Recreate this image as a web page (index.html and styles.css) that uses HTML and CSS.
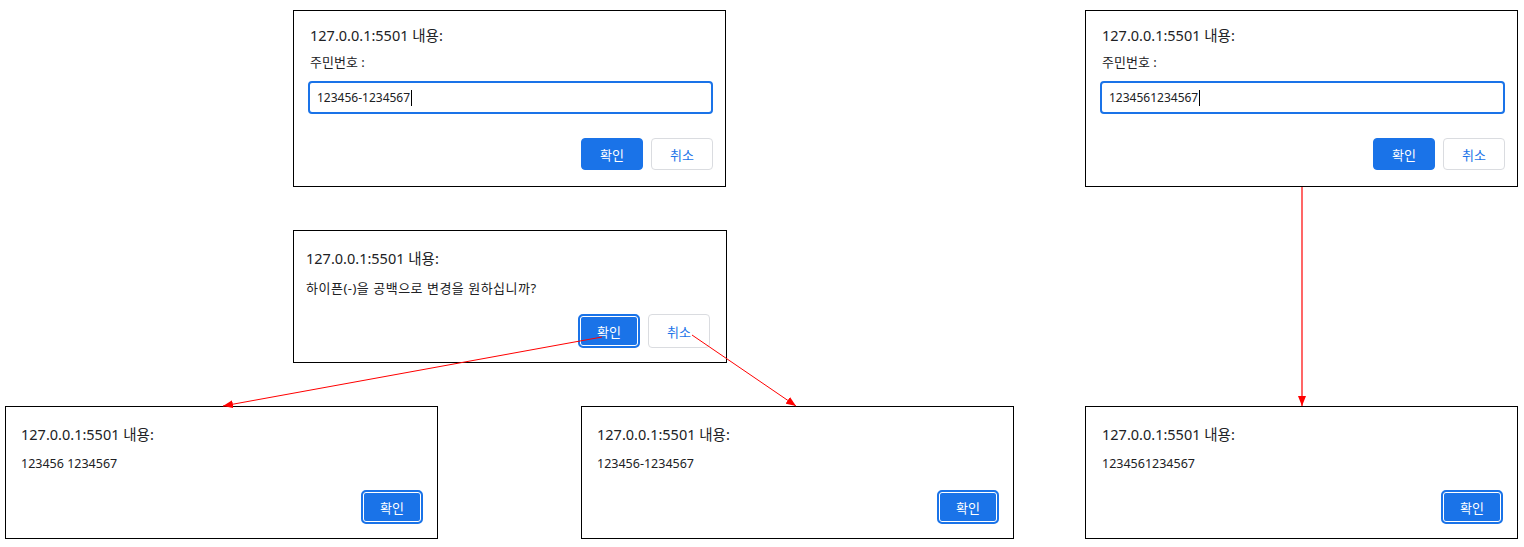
FILE: index.html
```html
<!DOCTYPE html>
<html lang="ko">
<head>
<meta charset="utf-8">
<title>prompt flow</title>
<link rel="stylesheet" href="styles.css">
</head>
<body>
<div class="canvas">
  <section class="dialog prompt d1">
    <div class="title">127.0.0.1:5501 내용:</div>
    <div class="label">주민번호 :</div>
    <div class="field"><span class="value">123456-1234567</span><span class="caret"></span></div>
    <div class="actions">
      <button class="btn primary">확인</button>
      <button class="btn secondary">취소</button>
    </div>
  </section>

  <section class="dialog alert d2">
    <div class="title">127.0.0.1:5501 내용:</div>
    <div class="message ko">하이픈(-)을 공백으로 변경을 원하십니까?</div>
    <div class="actions">
      <button class="btn primary focused">확인</button>
      <button class="btn secondary">취소</button>
    </div>
  </section>

  <section class="dialog alert d3">
    <div class="title">127.0.0.1:5501 내용:</div>
    <div class="message">123456 1234567</div>
    <div class="actions">
      <button class="btn primary focused">확인</button>
    </div>
  </section>

  <section class="dialog alert d4">
    <div class="title">127.0.0.1:5501 내용:</div>
    <div class="message">123456-1234567</div>
    <div class="actions">
      <button class="btn primary focused">확인</button>
    </div>
  </section>

  <section class="dialog prompt d5">
    <div class="title">127.0.0.1:5501 내용:</div>
    <div class="label">주민번호 :</div>
    <div class="field"><span class="value">1234561234567</span><span class="caret"></span></div>
    <div class="actions">
      <button class="btn primary">확인</button>
      <button class="btn secondary">취소</button>
    </div>
  </section>

  <section class="dialog alert d6">
    <div class="title">127.0.0.1:5501 내용:</div>
    <div class="message">1234561234567</div>
    <div class="actions">
      <button class="btn primary focused">확인</button>
    </div>
  </section>

  <svg class="arrows" width="1524" height="547" viewBox="0 0 1524 547">
    <defs>
      <marker id="head" markerWidth="10" markerHeight="8" refX="10" refY="4" orient="auto" markerUnits="userSpaceOnUse">
        <path d="M0 0 L10 4 L0 8 Z" fill="#ff0000"/>
      </marker>
    </defs>
    <line x1="602" y1="337" x2="223" y2="406" stroke="#ff0000" stroke-width="1" marker-end="url(#head)"/>
    <line x1="692" y1="335" x2="796" y2="406" stroke="#ff0000" stroke-width="1" marker-end="url(#head)"/>
    <line x1="1302" y1="187" x2="1302" y2="406" stroke="#ff0000" stroke-width="1.2" marker-end="url(#head)"/>
  </svg>
</div>
</body>
</html>
```

FILE: styles.css
```css
html, body {
  margin: 0;
  padding: 0;
  background: #ffffff;
}

.canvas {
  position: relative;
  width: 1524px;
  height: 547px;
  overflow: hidden;
  font-family: "Noto Sans", "Noto Sans CJK KR", sans-serif;
  color: #202124;
}

.dialog {
  position: absolute;
  box-sizing: border-box;
  width: 433px;
  border: 1px solid #000000;
  background: #ffffff;
  display: flex;
  flex-direction: column;
}

.prompt {
  height: 177px;
  padding: 14px 12px 16px 16px;
}

.alert {
  height: 133px;
  padding: 17px 14px 14px 15px;
}

.d1 { left: 293px; top: 10px; }
.d2 { left: 293px; top: 230px; width: 434px; padding-left: 12px; padding-right: 16px; }
.d3 { left: 5px; top: 406px; }
.d4 { left: 581px; top: 406px; }
.d5 { left: 1085px; top: 10px; }
.d6 { left: 1085px; top: 406px; padding-left: 16px; }

.title {
  font-size: 14.5px;
  line-height: 20px;
  color: #202124;
  white-space: nowrap;
}

.label {
  margin-top: 8px;
  font-size: 13px;
  line-height: 18px;
  color: #202124;
}

.message {
  margin-top: 11px;
  font-size: 12.5px;
  line-height: 18px;
  color: #202124;
  white-space: nowrap;
}

.message.ko {
  font-size: 13px;
  letter-spacing: 0.5px;
}

.field {
  margin-top: 10px;
  margin-left: -2px;
  height: 33px;
  box-sizing: border-box;
  border: 2px solid #1a73e8;
  border-radius: 4px;
  padding: 0 7px;
  display: flex;
  align-items: center;
  font-size: 12px;
  color: #202124;
}

.caret {
  display: inline-block;
  width: 1px;
  height: 16px;
  background: #000000;
  margin-left: 1px;
}

.actions {
  display: flex;
  justify-content: flex-end;
  gap: 8px;
  margin-top: auto;
}

.btn {
  box-sizing: border-box;
  width: 62px;
  height: 32px;
  border-radius: 4px;
  font-family: "Noto Sans", "Noto Sans CJK KR", sans-serif;
  font-size: 13px;
  padding: 0;
  cursor: default;
}

.alert .btn {
  height: 34px;
}

.primary {
  background: #1a73e8;
  color: #ffffff;
  border: 1px solid #1a73e8;
}

.secondary {
  background: #ffffff;
  color: #1a73e8;
  border: 1px solid #dadce0;
}

.focused {
  border: 2px solid #1a73e8;
  box-shadow: inset 0 0 0 1px #ffffff;
  border-radius: 5px;
}

.arrows {
  position: absolute;
  left: 0;
  top: 0;
  pointer-events: none;
}
```
